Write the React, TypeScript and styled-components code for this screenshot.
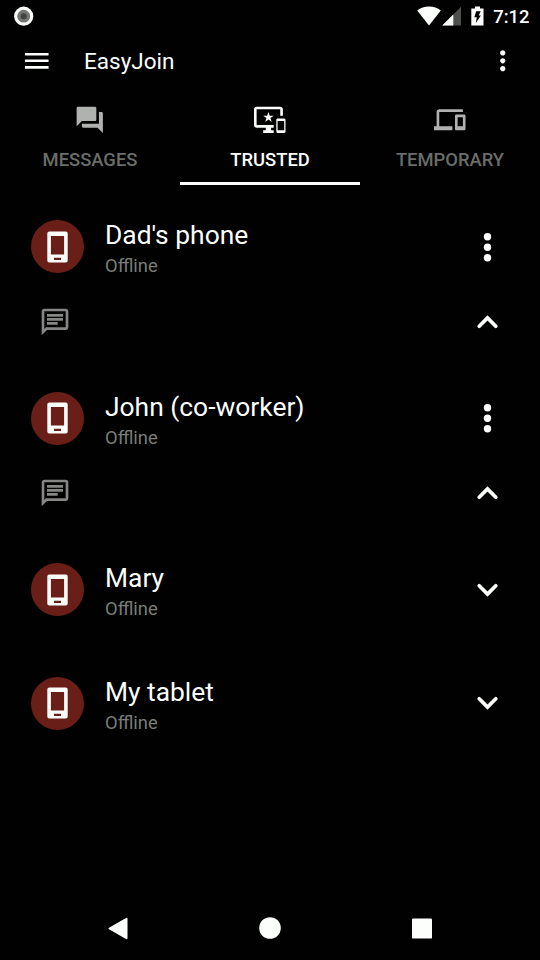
import React from "react";
import styled, { createGlobalStyle } from "styled-components";

const GlobalStyle = createGlobalStyle`
  * { box-sizing: border-box; }
  body { margin: 0; background: #000100; }
`;

const Screen = styled.div`
  display: flex;
  flex-direction: column;
  width: 540px;
  height: 960px;
  overflow: hidden;
  background: #000100;
  color: #fcfefb;
  font-family: Roboto, "Liberation Sans", sans-serif;
`;

const StatusBar = styled.header`
  display: flex;
  align-items: center;
  justify-content: space-between;
  height: 31px;
  padding: 0 10.5px 0 14px;
`;

const StatusIcons = styled.div`
  display: flex;
  align-items: center;
`;

const Clock = styled.time`
  margin-left: 9px;
  padding-top: 2px;
  font-size: 18.4px;
  line-height: 22px;
  font-weight: 500;
`;

const Glyph = styled.svg<{ $gap?: number }>`
  display: block;
  flex: none;
  margin-left: ${(p) => p.$gap ?? 0}px;
`;

const Toolbar = styled.div`
  display: flex;
  align-items: center;
  height: 60px;
  padding: 0 21.3px 0 21px;
`;

const Title = styled.h1`
  flex: 1;
  margin: 0 0 0 31.5px;
  font-size: 22.5px;
  line-height: 30px;
  font-weight: 400;
`;

const IconButton = styled.button`
  display: flex;
  flex: none;
  padding: 0;
  border: 0;
  background: none;
  color: inherit;
`;

const Tabs = styled.nav`
  display: grid;
  grid-template-columns: repeat(3, 1fr);
  height: 94px;
`;

const Tab = styled.div<{ $active?: boolean }>`
  display: flex;
  flex-direction: column;
  align-items: center;
  padding-top: 12.75px;
  border-bottom: 3px solid ${(p) => (p.$active ? "#fcfefb" : "transparent")};
  color: ${(p) => (p.$active ? "#fcfefb" : "#b0b2af")};
`;

const TabLabel = styled.span<{ $active?: boolean }>`
  margin-top: 13px;
  font-size: 18.4px;
  line-height: 24px;
  font-weight: 500;
  color: ${(p) => (p.$active ? "#fcfefb" : "#6b6d6a")};
`;

const DeviceList = styled.main`
  display: flex;
  flex: 1;
  flex-direction: column;
  gap: 12px;
  padding: 10.8px 10.5px 0;
`;

const Card = styled.section<{ $expanded?: boolean }>`
  height: ${(p) => (p.$expanded ? 159.5 : 101.7)}px;
  border-radius: 3px;
`;

const DeviceRow = styled.div`
  display: flex;
  align-items: center;
  height: 102px;
  padding: 0 21.5px 0 20.8px;
`;

const Avatar = styled.div`
  display: flex;
  align-items: center;
  justify-content: center;
  flex: none;
  width: 53px;
  height: 53px;
  border-radius: 50%;
  background: #691e18;
`;

const DeviceText = styled.div`
  display: flex;
  flex: 1;
  flex-direction: column;
  margin-left: 20.7px;
  padding-top: 4px;
`;

const DeviceName = styled.span`
  font-size: 26.4px;
  line-height: 32px;
`;

const DeviceStatus = styled.span`
  margin-top: 3px;
  font-size: 18.4px;
  line-height: 24px;
  color: #7a7c79;
`;

const ActionRow = styled.div`
  display: flex;
  align-items: center;
  justify-content: space-between;
  height: 48px;
  padding: 0 21.5px 0 28.5px;
`;

const Muted = styled.span`
  display: flex;
  color: #858784;
`;

const NavBar = styled.footer`
  display: flex;
  align-items: center;
  justify-content: space-between;
  height: 63px;
  padding: 0 108px 1px 107px;
`;

const icons = {
  menu: "M3 18h18v-2H3v2zm0-5h18v-2H3v2zm0-7v2h18V6H3z",
  more: "M12 8c1.1 0 2-.9 2-2s-.9-2-2-2-2 .9-2 2 .9 2 2 2zm0 2c-1.1 0-2 .9-2 2s.9 2 2 2 2-.9 2-2-.9-2-2-2zm0 6c-1.1 0-2 .9-2 2s.9 2 2 2 2-.9 2-2-.9-2-2-2z",
  forum:
    "M21 6h-2v9H6v2c0 .55.45 1 1 1h11l4 4V7c0-.55-.45-1-1-1zm-4 6V3c0-.55-.45-1-1-1H3c-.55 0-1 .45-1 1v14l4-4h10c.55 0 1-.45 1-1z",
  trusted:
    "M23 11.01L18 11c-.55 0-1 .45-1 1v9c0 .55.45 1 1 1h5c.55 0 1-.45 1-1v-9c0-.55-.45-.99-1-.99zM23 20h-5v-7h5v7zM20 2H2C.89 2 0 2.89 0 4v12c0 1.1.89 2 2 2h7v2H7v2h8v-2h-2v-2h2v-2H2V4h18v5h2V4c0-1.11-.9-2-2-2zm-8.03 7L11 6l-.97 3H7l2.47 1.76-.94 2.91 2.47-1.8 2.47 1.8-.94-2.91L15 9h-3.03z",
  devices:
    "M4 6h18V4H4c-1.1 0-2 .9-2 2v11H0v3h14v-3H4V6zm19 2h-6c-.55 0-1 .45-1 1v10c0 .55.45 1 1 1h6c.55 0 1-.45 1-1V9c0-.55-.45-1-1-1zm-1 9h-4v-7h4v7z",
  chat: "M4 4h16v12H5.17L4 17.17V4m0-2c-1.1 0-1.99.9-1.99 2L2 22l4-4h14c1.1 0 2-.9 2-2V4c0-1.1-.9-2-2-2H4zm2 10h8v2H6v-2zm0-3h12v2H6V9zm0-3h12v2H6V6z",
};

function Icon({ name, size = 31.5 }: { name: keyof typeof icons; size?: number }) {
  return (
    <Glyph width={size} height={size} viewBox="0 0 24 24" fill="currentColor">
      <path d={icons[name]} />
    </Glyph>
  );
}

function Chevron({ up }: { up?: boolean }) {
  return (
    <Glyph width="42" height="42" viewBox="-0.5 0 42 42" fill="none" stroke="currentColor" strokeWidth="3.7" strokeLinecap="round">
      <path d={up ? "M12.7 25.2L21 16.9L29.3 25.2" : "M12.7 16.8L21 25.1L29.3 16.8"} />
    </Glyph>
  );
}

function MoreVertical({ width, step, r }: { width: number; step: number; r: number }) {
  const h = step * 2 + r * 2 + 2;
  return (
    <Glyph width={width} height={h} viewBox={`${-width / 2} ${-h / 2} ${width} ${h}`} fill="currentColor">
      {[-step, 0, step].map((y) => (
        <circle key={y} cx="0.5" cy={y} r={r} />
      ))}
    </Glyph>
  );
}

function PhoneIcon() {
  return (
    <Glyph width="21" height="32" viewBox="0 0 21 32">
      <path
        fill="#fcfefb"
        fillRule="evenodd"
        d="M2.3.5h16.4a2 2 0 0 1 2 2v27a2 2 0 0 1-2 2H2.3a2 2 0 0 1-2-2v-27a2 2 0 0 1 2-2zM3.9 5v18.5h13.2V5zM7 26.7v2.2h7v-2.2z"
      />
    </Glyph>
  );
}

interface Device {
  name: string;
  expanded?: boolean;
}

const devices: Device[] = [
  { name: "Dad's phone", expanded: true },
  { name: "John (co-worker)", expanded: true },
  { name: "Mary" },
  { name: "My tablet" },
];

function DeviceCard({ name, expanded }: Device) {
  return (
    <Card $expanded={expanded}>
      <DeviceRow>
        <Avatar>
          <PhoneIcon />
        </Avatar>
        <DeviceText>
          <DeviceName>{name}</DeviceName>
          <DeviceStatus>Offline</DeviceStatus>
        </DeviceText>
        <IconButton>{expanded ? <MoreVertical width={42} step={10.5} r={3.7} /> : <Chevron />}</IconButton>
      </DeviceRow>
      {expanded && (
        <ActionRow>
          <Muted>
            <Icon name="chat" size={32} />
          </Muted>
          <IconButton>
            <Chevron up />
          </IconButton>
        </ActionRow>
      )}
    </Card>
  );
}

export default function App() {
  return (
    <>
      <GlobalStyle />
      <Screen>
        <StatusBar>
          <Glyph width="20" height="20" viewBox="0 0 20 20">
            <circle cx="9.7" cy="10.2" r="9.6" fill="#fcfefb" />
            <circle cx="9.7" cy="10.2" r="6.4" fill="#747673" />
            <circle cx="9.7" cy="10.2" r="3" fill="#41433f" />
          </Glyph>
          <StatusIcons>
            <Glyph width="24" height="20" viewBox="0 0 24 20">
              <path d="M.2 4.6C3.4 2 7.5.5 12 .5s8.6 1.5 11.8 4.1L12 19.5z" fill="#fcfefb" />
            </Glyph>
            <Glyph $gap={1.5} width="20" height="20" viewBox="0 0 20 20">
              <path d="M.2 19.5L19 .7v18.8z" fill="#4d4f4c" />
              <path d="M.2 19.5L11.3 8.4v11.1z" fill="#fcfefb" />
            </Glyph>
            <Glyph $gap={9} width="13" height="20" viewBox="0 0 13 20">
              <path d="M4 .5h5v2h3.5v17H.3v-17H4z" fill="#fcfefb" />
              <path d="M5.2 5.3h4.5L7.7 9.5h2.2L4.8 17l1-5.7H3.3z" fill="#000100" />
            </Glyph>
            <Clock>7:12</Clock>
          </StatusIcons>
        </StatusBar>
        <Toolbar>
          <IconButton>
            <Icon name="menu" />
          </IconButton>
          <Title>EasyJoin</Title>
          <IconButton>
            <Icon name="more" />
          </IconButton>
        </Toolbar>
        <Tabs>
          <Tab>
            <Icon name="forum" />
            <TabLabel>MESSAGES</TabLabel>
          </Tab>
          <Tab $active>
            <Icon name="trusted" />
            <TabLabel $active>TRUSTED</TabLabel>
          </Tab>
          <Tab>
            <Icon name="devices" />
            <TabLabel>TEMPORARY</TabLabel>
          </Tab>
        </Tabs>
        <DeviceList>
          {devices.map((device) => (
            <DeviceCard key={device.name} {...device} />
          ))}
        </DeviceList>
        <NavBar>
          <Glyph width="21" height="23" viewBox="0 0 21 23">
            <path d="M2.5 11.5L19.5 1.8v19.4z" fill="#fcfefb" stroke="#fcfefb" strokeWidth="2" strokeLinejoin="round" />
          </Glyph>
          <Glyph width="22" height="22" viewBox="0 0 22 22">
            <circle cx="11" cy="11" r="10.8" fill="#fcfefb" />
          </Glyph>
          <Glyph width="20" height="21" viewBox="0 0 20 21">
            <rect y=".4" width="20" height="20.2" rx="1.2" fill="#fcfefb" />
          </Glyph>
        </NavBar>
      </Screen>
    </>
  );
}
